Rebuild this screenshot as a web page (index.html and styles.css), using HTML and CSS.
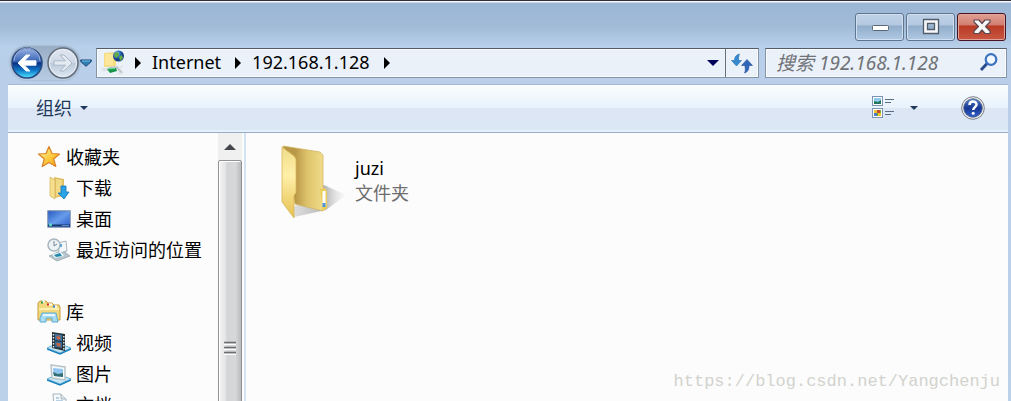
FILE: index.html
```html
<!DOCTYPE html>
<html lang="zh-CN">
<head>
<meta charset="utf-8">
<title>192.168.1.128</title>
<link rel="stylesheet" href="styles.css">
</head>
<body>
<div class="window">
  <header class="titlebar">
    <button class="caption" aria-label="最小化"><svg width="20" height="10" viewBox="0 0 20 10"><rect x="2.500" y="3.500" width="16" height="5" rx="1" fill="#fff" stroke="#5b6675"/></svg></button>
    <button class="caption" aria-label="最大化"><svg width="20" height="18" viewBox="0 0 20 18"><path d="M2.500 1.500H17.500V15.500H2.500ZM6.500 5.500V11.500H13.500V5.500Z" fill="#f7f8fa" fill-rule="evenodd" stroke="#505c6b" stroke-width="1.300"/></svg></button>
    <button class="caption caption-close" aria-label="关闭"><svg width="20" height="18" viewBox="0 0 20 18"><path d="M2 2H7L10 5.500L13 2H18V4L13.500 8.500L18 13V15.500H13L10 12L7 15.500H2V13L6.500 8.500L2 4Z" fill="#f8f8f8" stroke="#5c4650" stroke-width="1.200" stroke-linejoin="round"/></svg></button>
  </header>

  <div class="navrow">
    <nav class="history">
      <div class="history-pill">
        <button class="round" aria-label="后退"><svg width="32" height="32" viewBox="0 0 32 32">
          <defs><linearGradient id="bk" x1="0" y1="0" x2="0" y2="1"><stop offset="0" stop-color="#9cb4e3"/><stop offset=".45" stop-color="#3864b4"/><stop offset=".5" stop-color="#0b2f83"/><stop offset=".75" stop-color="#127bcb"/><stop offset="1" stop-color="#4feaff"/></linearGradient></defs>
          <circle cx="16" cy="16" r="15" fill="url(#bk)" stroke="#29477f" stroke-width="1.500"/><path d="M3 14A13 13 0 0 1 29 14" fill="none" stroke="#c9d9f5" opacity=".6"/>
          <path d="M7 16L15 8H19L13.500 13.800H25V18.200H13.500L19 24H15Z" fill="#fff" stroke="#eef5ff" stroke-linejoin="round"/></svg></button>
        <button class="round" aria-label="前进"><svg width="32" height="32" viewBox="0 0 32 32">
          <defs><linearGradient id="fw" x1="0" y1="0" x2="0" y2="1"><stop offset="0" stop-color="#dfe7f1"/><stop offset=".48" stop-color="#cfd9e5"/><stop offset=".52" stop-color="#bccada"/><stop offset="1" stop-color="#dfe9f5"/></linearGradient></defs>
          <circle cx="16" cy="16" r="15" fill="url(#fw)" stroke="#626d7b" stroke-width="1.500"/><circle cx="16" cy="16" r="13.500" fill="none" stroke="#e9eff6"/>
          <path d="M25 16L17 8H13L18.500 13.800H7V18.200H18.500L13 24H17Z" fill="#e4eaf1" stroke="#aab8c8" stroke-linejoin="round"/></svg></button>
      </div>
      <button class="recent" aria-label="最近的页面"><svg width="12" height="8" viewBox="0 0 12 8"><path d="M.7 1H11.300V2.500L6 7.300L.7 2.500Z" fill="#2f7fb5" stroke="#173f73"/><path d="M2 2H10" stroke="#7bc2e6"/></svg></button>
    </nav>

    <div class="address">
      <svg class="place" width="24" height="26" viewBox="0 0 24 26">
        <defs><radialGradient id="gl" cx=".35" cy=".3"><stop offset="0" stop-color="#b7e5fa"/><stop offset=".5" stop-color="#3d82c4"/><stop offset="1" stop-color="#123c89"/></radialGradient></defs>
        <path d="M1 20L7 19L10 17.500H16L21 23" fill="none" stroke="#bfc9ce" stroke-width="2.500"/><path d="M1 20L7 19M17 23L21 24M18 18L22 16" stroke="#e3e7e8" stroke-width="2"/>
        <path d="M3 3L15 2V16L3 17Z" fill="#f5dc80"/><path d="M4 4H12V15H4Z" fill="#fbe69a"/>
        <circle cx="17.500" cy="6" r="5.500" fill="url(#gl)"/><path d="M14 3L17 2L18 5L15 8L13 6ZM18 7L21 5L22 8L19 11Z" fill="#65ab3e"/>
        <path d="M6 19L15 18L16 21L9 23Z" fill="#169448"/><path d="M7 19L14 18.500" stroke="#6cdb93"/>
      </svg>
      <svg class="crumb-arrow" width="6" height="12" viewBox="0 0 6 12"><path d="M0 0L6 6L0 12Z"/></svg>
      <button class="crumb">Internet</button>
      <svg class="crumb-arrow" width="6" height="12" viewBox="0 0 6 12"><path d="M0 0L6 6L0 12Z"/></svg>
      <button class="crumb">192.168.1.128</button>
      <svg class="crumb-arrow" width="6" height="12" viewBox="0 0 6 12"><path d="M0 0L6 6L0 12Z"/></svg>
      <button class="history-drop" aria-label="以前的位置"><svg width="12" height="6" viewBox="0 0 12 6"><path d="M0 0H12L6 6Z" fill="#00005a"/></svg></button>
      <button class="refresh" aria-label="刷新"><svg width="22" height="22" viewBox="0 0 22 22"><path d="M8.500 2C5 3 3.500 5 3.500 8.500H.5L5.500 14L10.500 8.500H7.500C7.500 6 7.500 4 8.500 2Z" fill="#3689cf" stroke="#2468ac" stroke-width=".6"/><path d="M13.500 21C17 20 18 17 18 13.500H21.500L16 7.500L10.500 13.500H14C14 16 15 18.500 13.500 21Z" fill="#2f66b8" stroke="#234e98" stroke-width=".6"/></svg></button>
    </div>

    <label class="search">
      <input type="search" placeholder="搜索 192.168.1.128" aria-label="搜索 192.168.1.128">
      <svg width="20" height="20" viewBox="0 0 20 20"><path d="M2 17L8.500 10" stroke="#294d8c" stroke-width="3"/><circle cx="12" cy="6.500" r="5.300" fill="#f0f7ff" stroke="#3b72c0" stroke-width="2.200"/></svg>
    </label>
  </div>

  <main class="client">
    <div class="toolbar">
      <button class="organize">组织 <svg width="8" height="4" viewBox="0 0 8 4"><path d="M0 0H8L4 4Z" fill="#1e395b"/></svg></button>
      <button class="view" aria-label="更改您的视图">
        <svg width="23" height="23" viewBox="0 0 23 23"><g fill="#fff" stroke="#7d94b0"><rect x=".5" y=".5" width="10" height="9"/><rect x=".5" y="12.500" width="10" height="9"/></g><rect x="2" y="2" width="7" height="6" fill="#91cbed"/><path d="M2 8V5L6 6L9 4V8Z" fill="#21745e"/><rect x="2" y="14" width="7" height="6" fill="#76ad37"/><path d="M2 14H5V17H2ZM6 17H9V20H6Z" fill="#f0c428"/><path d="M5 14H8V17H5Z" fill="#c54835"/><path d="M2 17H5V20H2Z" fill="#5077c3"/><path d="M13 3.500H22M13 6.500H19M13 15.500H22M13 18.500H19" stroke="#596d88"/></svg>
      </button>
      <button class="view-drop" aria-label="更多选项"><svg width="8" height="4" viewBox="0 0 8 4"><path d="M0 0H8L4 4Z" fill="#1e395b"/></svg></button>
      <button class="help" aria-label="获取帮助"><svg width="24" height="24" viewBox="0 0 24 24"><defs><linearGradient id="hp" x1="0" y1="0" x2="0" y2="1"><stop offset="0" stop-color="#577fca"/><stop offset=".5" stop-color="#173894"/><stop offset="1" stop-color="#355fcb"/></linearGradient></defs><circle cx="12" cy="12" r="11.300" fill="#f5f5f5" stroke="#777d86"/><circle cx="12" cy="12" r="9.300" fill="url(#hp)" stroke="#52627d" stroke-width=".8"/><path d="M8.500 9C8.500 4.500 15.500 4.500 15.500 8.500C15.500 11 12.200 11.200 12.200 14" fill="none" stroke="#fff" stroke-width="2.500"/><circle cx="12.200" cy="17.300" r="1.500" fill="#fff"/></svg></button>
    </div>

    <div class="panes">
      <aside class="tree">
        <ul class="group">
          <li class="item root"><svg width="24" height="24" viewBox="0 0 24 24"><defs><linearGradient id="st" x1="0" y1="0" x2="1" y2="1"><stop offset="0" stop-color="#fff6a8"/><stop offset=".6" stop-color="#fbc536"/><stop offset="1" stop-color="#f39a20"/></linearGradient></defs><path d="M12 1.500L15 8.500L22.500 9L16.700 14L18.800 21.500L12 17.500L5.200 21.500L7.300 14L1.500 9L9 8.500Z" fill="url(#st)" stroke="#d98228" stroke-width="1.200" stroke-linejoin="round"/></svg><span>收藏夹</span></li>
          <li class="item"><svg width="24" height="24" viewBox="0 0 24 24"><path d="M7 1L17 3V20L7 22Z" fill="#e0bf60"/><path d="M3 1L8 4V23L3 20Z" fill="#f6df8c" stroke="#d2b25f" stroke-width=".7"/><path d="M9 3L15 4V18L9 20Z" fill="#f1d986"/><path d="M14 10H19V16H22L17 23L11 17H14Z" fill="#28a4e4" stroke="#1471b6" stroke-width=".8"/></svg><span>下载</span></li>
          <li class="item"><svg width="24" height="24" viewBox="0 0 24 24"><defs><linearGradient id="ds" x1="0" y1="0" x2="1" y2="1"><stop offset="0" stop-color="#255ac3"/><stop offset=".5" stop-color="#679ceb"/><stop offset="1" stop-color="#2458c8"/></linearGradient></defs><rect x=".8" y="3.800" width="22.400" height="16.400" fill="url(#ds)" stroke="#788aa9"/><path d="M1 18.500H23" stroke="#16366c" stroke-width="2"/><circle cx="3.500" cy="17.800" r="1.500" fill="#5fe3d0"/><path d="M15 18.500H22" stroke="#5b91c8"/></svg><span>桌面</span></li>
          <li class="item"><svg width="24" height="24" viewBox="0 0 24 24"><path d="M2 18L15 12L23 18L10 23Z" fill="#b9c5cd" stroke="#8f9ca7" stroke-width=".7"/><path d="M11 5L19 3L20 13L12 15Z" fill="#f3f7f8" stroke="#a9b4bd"/><circle cx="7" cy="7" r="6" fill="#edf3f5" stroke="#a8b5bd" stroke-width="1.500"/><path d="M7 3V8L10 6" fill="none" stroke="#70879a"/><path d="M5 16L14 14L17 18L8 20Z" fill="#e9f6fa"/><path d="M7 17L13 15L15 18L9 19Z" fill="#2788ab"/><path d="M13 6H15V9H13Z" fill="#5ba6dd"/></svg><span>最近访问的位置</span></li>
        </ul>
        <ul class="group">
          <li class="item root"><svg width="24" height="24" viewBox="0 0 24 24"><path d="M1 3L3 1H9L11 3H15L17 5H22L23 7V20H1Z" fill="#f3d77c" stroke="#c69e3c"/><path d="M5 1.500H8M11 4.500H15M17 6.500H20" stroke="#fff" stroke-width="2"/><path d="M4 2.500H6" stroke="#2b9d46" stroke-width="2"/><path d="M10 4.500H12" stroke="#d42b21" stroke-width="2"/><path d="M16 6.500H18" stroke="#2b80cd" stroke-width="2"/><path d="M2 9H22" stroke="#fff0af" stroke-width="2"/><path d="M5 13H19L21 22H15V18H9V22H3V18Z" fill="#a9dcf2" stroke="#5cacd2"/><path d="M6 15H18" stroke="#e4f7ff" stroke-width="2"/></svg><span>库</span></li>
          <li class="item"><svg width="24" height="24" viewBox="0 0 24 24"><path d="M0 17L11 12L24 17L13 22Z" fill="#c5e6f4" stroke="#6db1d4"/><path d="M0 18L13 23L24 18" fill="none" stroke="#1880bd" stroke-width="1.500"/><path d="M5 1L18 3V20L5 17Z" fill="#25333b"/><path d="M8 3L15 4V10L8 9Z" fill="#3d74a9"/><path d="M8 10L15 11V17L8 16Z" fill="#356894"/><path d="M9 6L12 4L14 8L11 9ZM9 12L13 12L14 16L10 15Z" fill="#bd6544"/><path d="M6.500 3V17M16.800 5V19" stroke="#e8edf0" stroke-width="1.400" stroke-dasharray="1.500 1.500"/></svg><span>视频</span></li>
          <li class="item"><svg width="24" height="24" viewBox="0 0 24 24"><path d="M0 17L11 12L24 17L13 22Z" fill="#c5e6f4" stroke="#6db1d4"/><path d="M0 18L13 23L24 18" fill="none" stroke="#1880bd" stroke-width="1.500"/><path d="M4 3L18 5V18L5 16Z" fill="#f7fafb" stroke="#b7c4ca" stroke-width="1.500"/><path d="M6 6L16 7V15L7 14Z" fill="#90c5f2"/><path d="M6 10L11 12L16 11V15L7 14Z" fill="#336f72"/></svg><span>图片</span></li>
          <li class="item"><svg width="24" height="24" viewBox="0 0 24 24"><path d="M0 17L11 12L24 17L13 22Z" fill="#c5e6f4" stroke="#6db1d4"/><path d="M6 1H14L19 6V20L7 17Z" fill="#f7fafb" stroke="#a8b5bd"/><path d="M14 1V6H19" fill="#dce5ea" stroke="#a8b5bd"/><path d="M9 5H12M9 8H16M9 11H16" stroke="#79a8cf"/></svg><span>文档</span></li>
        </ul>
      </aside>
      <div class="scrollbar">
        <button class="scroll-up" aria-label="向上滚动"><svg width="12" height="6" viewBox="0 0 12 6"><path d="M0 6L6 0L12 6Z" fill="#43474c"/></svg></button>
        <div class="thumb"><svg width="12" height="16" viewBox="0 0 12 16"><path d="M0 1.500H12M0 6.500H12M0 11.500H12" stroke="#6b6e72" stroke-width="1.400"/><path d="M0 3.500H12M0 8.500H12M0 13.500H12" stroke="#fff"/></svg></div>
      </div>
      <section class="files">
        <div class="file">
          <svg width="68" height="76" viewBox="0 0 68 76">
            <defs>
              <linearGradient id="fb" x1="0" y1="0" x2="1" y2="0"><stop offset="0" stop-color="#b89746"/><stop offset=".3" stop-color="#b89746"/><stop offset=".6" stop-color="#dec26b"/><stop offset="1" stop-color="#f0dc8a"/></linearGradient>
              <linearGradient id="ff" x1="0" y1="0" x2="0" y2="1"><stop offset="0" stop-color="#f0dc8a"/><stop offset=".4" stop-color="#fff0a9"/><stop offset="1" stop-color="#e5c050"/></linearGradient>
              <linearGradient id="fs" x1="0" y1="0" x2="1" y2="0"><stop offset="0" stop-color="#999" stop-opacity=".3"/><stop offset=".6" stop-color="#999" stop-opacity=".7"/><stop offset="1" stop-color="#ddd" stop-opacity=".1"/></linearGradient>
            </defs>
            <path d="M44 43L66 53L46 68L14 75V65Z" fill="url(#fs)"/>
            <path d="M3 4L40 10L43 13V69L15 62Z" fill="url(#fb)" stroke="#d3b565" stroke-width=".8"/>
            <path d="M40 47L45 46L47 49V66L43 69Z" fill="#edcd55"/><path d="M42.500 49H45.500V64H42.500Z" fill="#fff"/><path d="M42.500 61H45.500V65H42.500Z" fill="#4b93db"/>
            <path d="M2 5L14 14L16 17V51L14 53V76L2 60Z" fill="url(#ff)" stroke="#d8b758" stroke-width=".8"/>
          </svg>
          <div class="file-text"><div>juzi</div><div class="kind">文件夹</div></div>
        </div>
        <div class="watermark">https://blog.csdn.net/Yangchenju</div>
      </section>
    </div>
  </main>
</div>
</body>
</html>
```
FILE: styles.css
```css
* { box-sizing: border-box; }
body {
  margin: 0;
  font: 18px/24px "Noto Sans", "Noto Sans CJK SC", sans-serif;
  color: #000;
}
button {
  display: flex;
  align-items: center;
  justify-content: center;
  margin: 0;
  padding: 0;
  border: 0;
  background: none;
  color: inherit;
  font: inherit;
}
svg { display: block; flex: none; }
.window {
  display: flex;
  flex-direction: column;
  height: 100vh;
  overflow: hidden;
  border-top: 1px solid #34303b;
  background: linear-gradient(#f5f9fc 0, #f5f9fc 1px, #9cb6d7 2px, #a1bad7 25px, #b8d0ea 46px, #bacee9 85px, #bad1e9 100%);
}
.titlebar {
  display: flex;
  justify-content: flex-end;
  gap: 2px;
  padding: 12px 5px 7px;
}
.caption {
  width: 49px;
  height: 28px;
  border: 1px solid #60758e;
  border-radius: 3px;
  box-shadow: inset 0 0 0 1px #d1e0f0;
  background: linear-gradient(#bed1e6 0, #b4c9e1 42%, #91adcb 46%, #b0c9e3 100%);
}
.caption-close {
  border-color: #4a1321;
  box-shadow: inset 0 0 0 1px #dfa397;
  background: linear-gradient(#e0a094 0, #d27e70 42%, #b93a24 46%, #c95843 100%);
}
.navrow {
  display: flex;
  align-items: center;
  padding: 0 4px 0 10px;
}
.history { display: flex; align-items: center; width: 86px; height: 30px; }
.history-pill {
  display: flex;
  align-items: center;
  justify-content: space-between;
  flex: none;
  width: 70px;
  height: 34px;
  padding: 0 1px;
  border-radius: 17px;
  background: linear-gradient(#99adc4, #b7cbe2);
  box-shadow: 0 0 2px #8b9db3;
}
.recent { width: 12px; height: 24px; }
.address {
  display: flex;
  align-items: center;
  flex: 1;
  height: 30px;
  border: 1px solid #8695a6;
  border-top-color: #545d67;
  box-shadow: inset 0 0 0 1px #f9fcff;
  background: #eaf1f9;
}
.place { margin: 0 10px 0 4px; }
.crumb { padding: 0 14px 2px 11px; }
.history-drop { width: 24px; height: 28px; margin-left: auto; }
.refresh { width: 33px; height: 28px; border-left: 1px solid #68727d; }
.search {
  display: flex;
  align-items: center;
  width: 242px;
  height: 30px;
  margin-left: 6px;
  padding: 0 7px 0 10px;
  border: 1px solid #8695a6;
  border-top-color: #545d67;
  box-shadow: inset 0 0 0 1px #f9fcff;
  background: #eaf1f9;
}
.search input {
  flex: 1;
  min-width: 0;
  padding: 0;
  border: 0;
  outline: 0;
  background: none;
  font: inherit;
  font-size: 19px;
  font-style: italic;
}
.search input::placeholder { color: #707277; opacity: 1; }
.client {
  display: flex;
  flex-direction: column;
  flex: 1;
  min-height: 0;
  margin: 6px 3px 0 8px;
}
.toolbar {
  display: flex;
  align-items: center;
  flex: none;
  height: 49px;
  padding: 0 23px 2px 28px;
  border-top: 1px solid #a5bbd5;
  border-bottom: 1px solid #98aec9;
  box-shadow: inset 0 -2px #e6f0fa;
  background: linear-gradient(#fafdff 0, #e8f2fb 48%, #dce6f4 50%, #dce7f5 100%);
  color: #1e395b;
}
.organize { gap: 8px; }
.view { margin-left: auto; }
.view-drop { margin-left: 15px; }
.help { margin-left: 43px; }
.panes {
  display: flex;
  flex: 1;
  min-height: 0;
  background: #fcfcfc;
}
.tree {
  flex: none;
  width: 210px;
  padding-top: 8px;
  overflow: hidden;
}
.group { margin: 0 0 31px; padding: 0; list-style: none; }
.item {
  display: flex;
  align-items: center;
  gap: 5px;
  height: 31px;
  padding-left: 39px;
  white-space: nowrap;
}
.item.root { padding-left: 29px; }
.scrollbar {
  display: flex;
  flex-direction: column;
  flex: none;
  width: 24px;
  background: #f0f0f0;
}
.scroll-up { flex: none; height: 27px; }
.thumb {
  display: flex;
  align-items: center;
  justify-content: center;
  flex: none;
  height: 377px;
  border: 1px solid #929292;
  border-radius: 2px;
  box-shadow: inset 1px 1px #fff;
  background: linear-gradient(90deg, #f3f3f3 0, #e5e5e6 30%, #d4d5d7 35%, #d7d8da 75%, #b9babd 100%);
}
.files {
  position: relative;
  flex: 1;
  margin-left: 2px;
  padding: 9px 34px;
  border-left: 2px solid #d4e3f5;
}
.file { display: flex; align-items: center; gap: 7px; }
.file-text { padding-top: 2px; line-height: 25px; }
.kind { color: #6d6d6d; }
.watermark {
  position: absolute;
  right: 8px;
  bottom: 7px;
  color: #d2d3cd;
  font: 17px/24px "Liberation Mono", monospace;
}
```
